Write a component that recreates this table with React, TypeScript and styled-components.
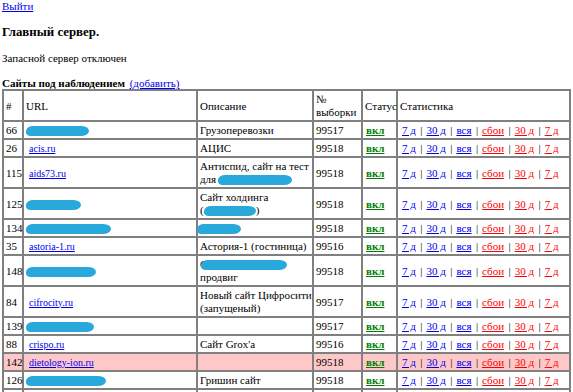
import styled, { createGlobalStyle } from "styled-components";

const GlobalStyle = createGlobalStyle`
    html, body {
        margin: 0;
        overflow: hidden;
        background: #ffffff;
    }
    body {
        padding: 0 2px;
        font-family: "Liberation Serif", "Times New Roman", serif;
        font-size: 11px;
        line-height: 13px;
        color: #000000;
    }
`;

const Link = styled.a<{ $color?: string }>`
    color: ${(p) => p.$color || "#0000ee"};
    text-decoration: underline;
    cursor: pointer;
`;

const Title = styled.h3`
    font-size: 1.17em;
    line-height: 15px;
    font-weight: bold;
    margin: 12px 0;
`;

const Note = styled.p`
    margin: 11px 0;
`;

const Caption = styled.div`
    margin-top: 12px;
    line-height: 12px;
    font-weight: bold;
`;

const AddLink = styled(Link)`
    font-weight: normal;
    margin-left: 2px;
`;

const Table = styled.table`
    width: 569px;
    table-layout: fixed;
    border-collapse: separate;
    border-spacing: 0;
    border: 1px solid #808080;
    font-family: "Liberation Serif", "Times New Roman", serif;
    font-size: 11px;
`;

const Cell = styled.td<{ $w?: number }>`
    box-sizing: border-box;
    ${(p) => (p.$w ? `width: ${p.$w}px;` : "")}
    border: 1px solid #808080;
    padding: 2px 0 1px 2px;
    vertical-align: middle;
    text-align: left;
    line-height: 13px;
    white-space: nowrap;
`;

const Row = styled.tr<{ $alert?: boolean }>`
    background: ${(p) => (p.$alert ? "#ffc8c8" : "transparent")};
`;

const UrlLink = styled(Link)`
    font-size: 10px;
    margin-left: 3px;
`;

const Blob = styled.span<{ $w: number; $shift?: number }>`
    display: inline-block;
    width: ${(p) => p.$w}px;
    height: 10px;
    margin-left: ${(p) => p.$shift ?? 0}px;
    background: #29a8dc;
    border-radius: 7px 9px 8px 6px / 5px 6px 5px 5px;
    vertical-align: middle;
    transform: skewX(-8deg);
`;

const StatusLink = styled(Link)`
    color: #008000;
    font-weight: bold;
    margin-left: 1px;
`;

const Stats = styled.span`
    margin-left: 2px;
`;

const Sep = styled.span`
    margin: 0 4px 0 4.4px;
`;

type Site = {
    id: number;
    url?: string;
    blob?: number;
    desc: React.ReactNode;
    sample: number;
    alert?: boolean;
};

const sites: Site[] = [
    { id: 66, blob: 63, desc: "Грузоперевозки", sample: 99517 },
    { id: 26, url: "acis.ru", desc: "АЦИС", sample: 99518 },
    {
        id: 115,
        url: "aids73.ru",
        desc: (
            <>
                Антиспид, сайт на тест
                <br />
                для
                <Blob $w={74} $shift={2} />
            </>
        ),
        sample: 99518,
    },
    {
        id: 125,
        blob: 55,
        desc: (
            <>
                Сайт холдинга
                <br />(
                <Blob $w={52} />)
            </>
        ),
        sample: 99518,
    },
    { id: 134, blob: 85, desc: <Blob $w={44} $shift={-3} />, sample: 99518 },
    { id: 35, url: "astoria-1.ru", desc: "Астория-1 (гостиница)", sample: 99516 },
    {
        id: 148,
        blob: 70,
        desc: (
            <>
                С
                <Blob $w={86} $shift={-6} />
                <br />
                продвиг
            </>
        ),
        sample: 99518,
    },
    {
        id: 84,
        url: "cifrocity.ru",
        desc: (
            <>
                Новый сайт Цифросити
                <br />
                (запущеный)
            </>
        ),
        sample: 99517,
    },
    { id: 139, blob: 68, desc: "", sample: 99517 },
    { id: 88, url: "crispo.ru", desc: "Сайт Grox'a", sample: 99516 },
    { id: 142, url: "dietology-ion.ru", desc: "", sample: 99518, alert: true },
    { id: 126, blob: 80, desc: "Гришин сайт", sample: 99518 },
    { id: 131, blob: 60, desc: "", sample: 99518 },
    { id: 140, blob: 70, desc: "", sample: 99518 },
];

const StatLinks = () => (
    <Stats>
        <Link>7 д</Link>
        <Sep>|</Sep>
        <Link>30 д</Link>
        <Sep>|</Sep>
        <Link>вся</Link>
        <Sep>|</Sep>
        <Link $color="#ff0000">сбои</Link>
        <Sep>|</Sep>
        <Link $color="#ff0000">30 д</Link>
        <Sep>|</Sep>
        <Link $color="#ff0000">7 д</Link>
    </Stats>
);

const App = (): JSX.Element => {
    return (
        <>
            <GlobalStyle />
            <Link>Выйти</Link>
            <Title>Главный сервер.</Title>
            <Note>Запасной сервер отключен</Note>
            <Caption>
                Сайты под наблюдением <AddLink>(добавить)</AddLink>
            </Caption>
            <Table>
                <tbody>
                    <tr>
                        <Cell $w={20}>#</Cell>
                        <Cell $w={174}>URL</Cell>
                        <Cell $w={116}>Описание</Cell>
                        <Cell $w={49}>
                            №
                            <br />
                            выборки
                        </Cell>
                        <Cell $w={35}>Статус</Cell>
                        <Cell $w={173}>Статистика</Cell>
                    </tr>
                    {sites.map((site) => (
                        <Row key={site.id} $alert={site.alert}>
                            <Cell>{site.id}</Cell>
                            <Cell>{site.url ? <UrlLink>{site.url}</UrlLink> : <Blob $w={site.blob || 60} />}</Cell>
                            <Cell>{site.desc}</Cell>
                            <Cell>{site.sample}</Cell>
                            <Cell>
                                <StatusLink>вкл</StatusLink>
                            </Cell>
                            <Cell>
                                <StatLinks />
                            </Cell>
                        </Row>
                    ))}
                </tbody>
            </Table>
        </>
    );
};

export default App;
